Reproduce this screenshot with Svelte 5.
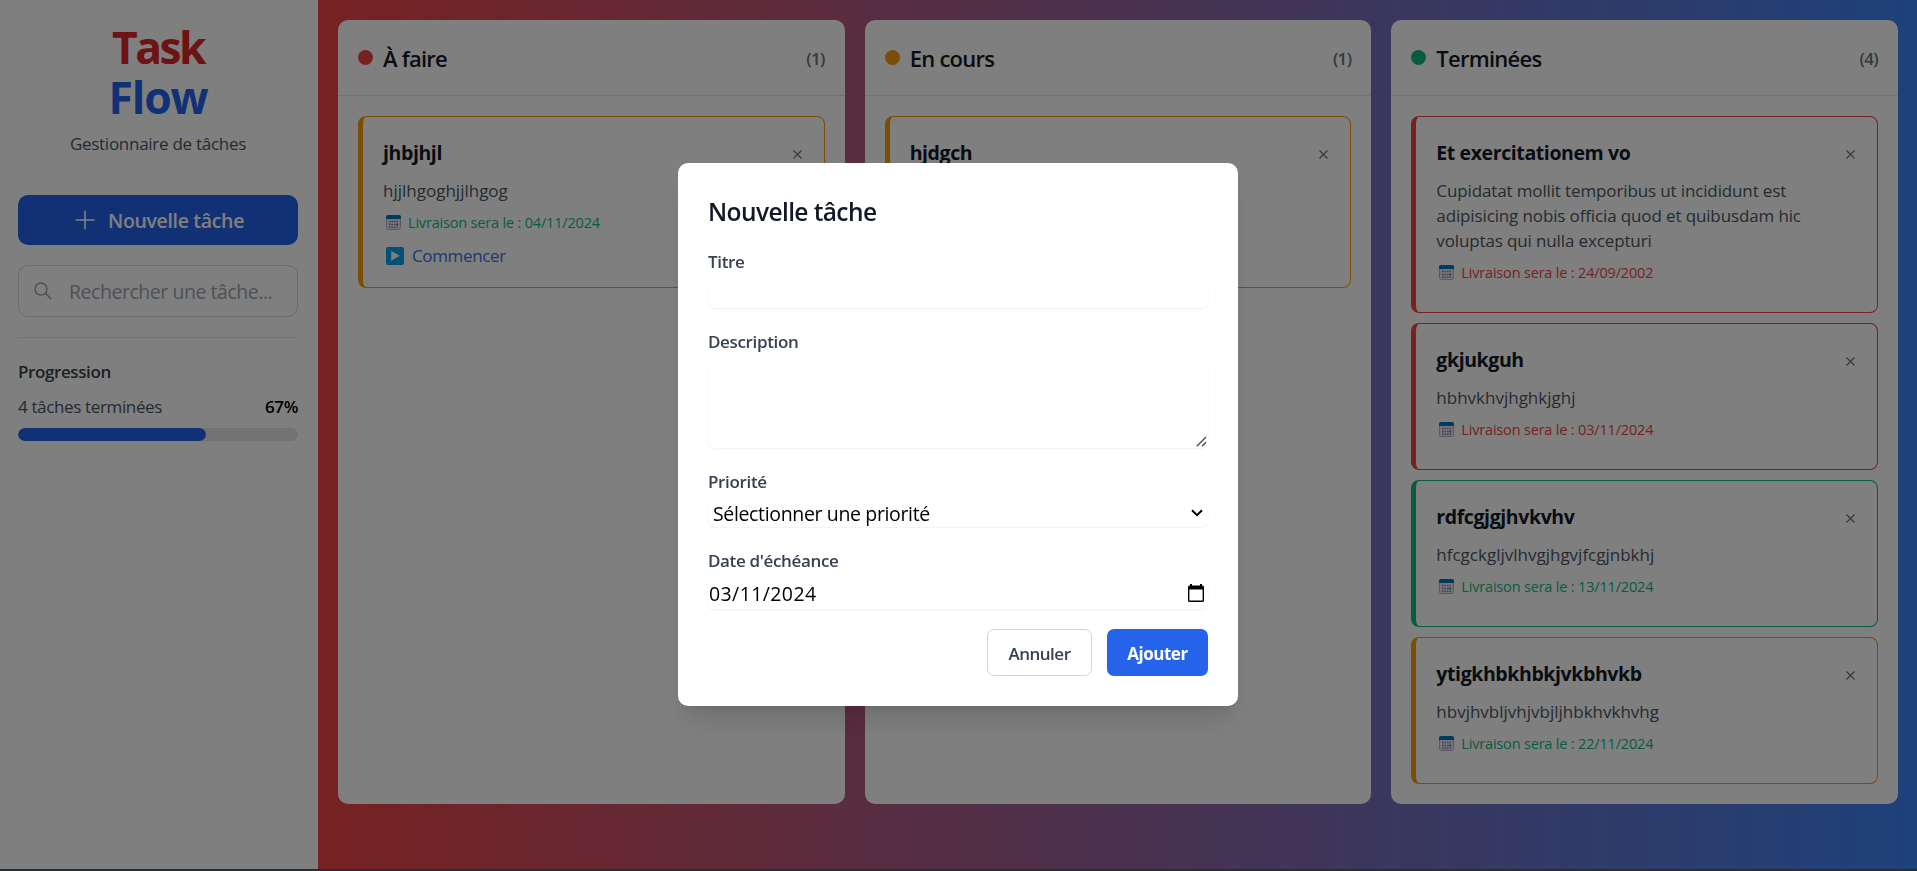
<script>
  const columns = [
    {
      name: 'À faire', color: '#ef4444',
      tasks: [
        { title: 'jhbjhjl', text: ['hjjlhgoghjjlhgog'], date: '04/11/2024', late: false, color: '#f59e0b', action: 'Commencer' }
      ]
    },
    {
      name: 'En cours', color: '#f59e0b',
      tasks: [
        { title: 'hjdgch', text: ['hjdgch'], date: '04/11/2024', late: false, color: '#f59e0b', action: 'Terminer' }
      ]
    },
    {
      name: 'Terminées', color: '#10b981',
      tasks: [
        { title: 'Et exercitationem vo', text: ['Cupidatat mollit temporibus ut incididunt est', 'adipisicing nobis officia quod et quibusdam hic', 'voluptas qui nulla excepturi'], date: '24/09/2002', late: true, color: '#ef4444' },
        { title: 'gkjukguh', text: ['hbhvkhvjhghkjghj'], date: '03/11/2024', late: true, color: '#ef4444' },
        { title: 'rdfcgjgjhvkvhv', text: ['hfcgckgljvlhvgjhgvjfcgjnbkhj'], date: '13/11/2024', late: false, color: '#10b981' },
        { title: 'ytigkhbkhbkjvkbhvkb', text: ['hbvjhvbljvhjvbjljhbkhvkhvhg'], date: '22/11/2024', late: false, color: '#f59e0b' }
      ]
    }
  ];
  const done = columns[2].tasks.length;
</script>

<div class="app">
  <aside>
    <h1><span class="red">Task</span><span class="blue">Flow</span></h1>
    <p class="sub">Gestionnaire de tâches</p>
    <button class="new">
      <svg width="20" height="20" viewBox="0 0 20 20"><path d="M10 .5v19M.5 10h19" stroke="#fff" stroke-width="1.6" fill="none" /></svg>
      <span>Nouvelle tâche</span>
    </button>
    <div class="search">
      <svg width="18" height="18" viewBox="0 0 18 18" fill="none" stroke="#9ca3af" stroke-width="1.5"><circle cx="7" cy="7" r="6" /><path d="M11.4 11.4l5.8 5.6" /></svg>
      <span>Rechercher une tâche...</span>
    </div>
    <hr />
    <h3>Progression</h3>
    <div class="stat"><span>{done} tâches terminées</span><b>67%</b></div>
    <div class="bar"><i style="width:67%"></i></div>
  </aside>

  <main>
    {#each columns as col}
      <section>
        <header>
          <i class="dot" style="background:{col.color}"></i>
          <h2>{col.name}</h2>
          <span class="count">({col.tasks.length})</span>
        </header>
        <div class="list">
          {#each col.tasks as t}
            <article style="border-color:{t.color}">
              <div class="head">
                <h4>{t.title}</h4>
                <svg class="x" width="9" height="9" viewBox="0 0 9 9"><path d="M.5 .5l8 8M8.5 .5l-8 8" stroke="#6b7280" stroke-width="1.2" /></svg>
              </div>
              <div class="desc" class:single={t.text.length === 1}>{#each t.text as line}<div>{line}</div>{/each}</div>
              <div class="date" class:late={t.late}>
                <svg width="15" height="15" viewBox="0 0 15 15">
                  <rect x=".5" y=".5" width="14" height="14" rx="1.8" fill="#ece6f2" stroke="#b9aec6" />
                  <path d="M0 4V2a2 2 0 0 1 2-2h11a2 2 0 0 1 2 2v2z" fill="#0074ba" />
                  <path d="M3 6.5h10M3 9.5h10M3 12.3h10" stroke="#8b7f99" stroke-width="1.4" stroke-dasharray="1.5 1" />
                  <rect x="10.4" y="8.7" width="1.8" height="1.6" fill="#0883d9" />
                </svg>
                <span>Livraison sera le : {t.date}</span>
              </div>
              <div class="foot">
                {#if t.action}
                  <div class="act">
                    <svg width="18" height="18" viewBox="0 0 18 18"><rect width="18" height="18" rx="2" fill="#00a6ed" /><path d="M5.2 4l8.6 4.8-8.6 4.9z" fill="#fff" /></svg>
                    <span>{t.action}</span>
                  </div>
                {/if}
              </div>
            </article>
          {/each}
        </div>
      </section>
    {/each}
  </main>
</div>

<div class="overlay">
  <form class="modal">
    <h2 class="mtitle">Nouvelle tâche</h2>
    <label for="t">Titre</label>
    <input id="t" class="field" />
    <label for="d">Description</label>
    <div class="area">
      <textarea id="d" class="field"></textarea>
      <svg class="grip" width="11" height="11" viewBox="0 0 11 11"><path d="M.8 10.3L10 1M6 10.3L10 6.2" stroke="#444" stroke-width="1.3" fill="none" /></svg>
    </div>
    <label for="p">Priorité</label>
    <div id="p" class="field select">
      <span>Sélectionner une priorité</span>
      <svg width="12" height="8" viewBox="0 0 12 8"><path d="M1 1.2l5 5 5-5" fill="none" stroke="#000" stroke-width="2" /></svg>
    </div>
    <label for="e">Date d'échéance</label>
    <div id="e" class="field day">
      <span>03/11/2024</span>
      <svg width="16" height="18" viewBox="0 0 16 18"><path d="M2 0h2v1.6h8V0h2v1.6h.4A1.6 1.6 0 0 1 16 3.200v13.200a1.600 1.600 0 0 1-1.600 1.600H1.600A1.600 1.600 0 0 1 0 16.400V3.200A1.600 1.600 0 0 1 1.600 1.600H2zM1.400 5.600v11h13.200v-11z" fill="#000" fill-rule="evenodd" /></svg>
    </div>
    <div class="buttons">
      <button type="button" class="cancel"><span>Annuler</span></button>
      <button type="button" class="add"><span>Ajouter</span></button>
    </div>
  </form>
</div>
<div class="edge"></div>

<style>
  :global(body) { margin: 0; overflow: hidden; }
  .app, .overlay { font-family: "Open Sans", "Noto Sans", sans-serif; }
  .app *, .overlay, .overlay * { box-sizing: border-box; }
  h1, h2, h3, h4, p { margin: 0; }
  span, h2, h3, h4, .desc div { white-space: nowrap; }
  button, input, textarea { font-family: inherit; }
  .app { display: flex; height: 871px; background: #fff; }
  aside { width: 318px; flex: none; padding: 20px 20px 0 18px; background: #fff; }
  h1 { display: flex; flex-direction: column; align-items: center; font-size: 44.5px; line-height: 50px; font-weight: 700; padding: 2px 0 3px; letter-spacing: -1.2px; }
  .red { color: #dc2626; letter-spacing: -2.6px; }
  .blue { color: #2563eb; }
  .sub { text-align: center; color: #4b5563; font-size: 17px; line-height: 25px; margin-top: 6px; letter-spacing: -.27px; }
  .new { width: 280px; height: 50px; margin-top: 39px; padding: 0 0 0 3px; border: 0; border-radius: 10px; background: #2563eb; color: #fff; display: flex; align-items: center; justify-content: center; gap: 13px; font-size: 19.5px; font-weight: 600; letter-spacing: -.33px; }
  .new span { padding-top: 1px; }
  .search { width: 280px; height: 52px; margin-top: 20px; border: 1px solid #d1d5db; border-radius: 10px; display: flex; align-items: center; padding-left: 15px; gap: 17px; color: #9ca3af; font-size: 19.5px; letter-spacing: -.46px; }
  .search svg { margin-bottom: 1px; }
  .search span { padding-top: 1px; }
  hr { width: 280px; height: 1px; margin: 20px 0 0; border: 0; background: #e5e7eb; }
  h3 { margin-top: 20px; color: #374151; font-size: 17px; line-height: 28px; font-weight: 600; letter-spacing: -.4px; }
  .stat { width: 280px; display: flex; justify-content: space-between; margin-top: 8px; font-size: 17px; line-height: 25px; color: #4b5563; letter-spacing: -.36px; }
  .stat b { color: #000; font-weight: 600; }
  .bar { width: 280px; height: 13px; margin-top: 9px; border-radius: 7px; background: #e5e7eb; overflow: hidden; }
  .bar i { display: block; height: 100%; border-radius: 7px; background: #2563eb; }

  main { flex: 1; display: grid; grid-template-columns: repeat(3, minmax(0, 1fr)); gap: 20px; padding: 20px 19px 20px 20px; align-items: start; background: linear-gradient(to right, #ef4444, #3b82f6); }
  section { height: 784px; border-radius: 10px; background: #fff; }
  header { height: 76px; padding: 0 20px; border-bottom: 1px solid #e5e7eb; display: flex; align-items: center; }
  .dot { width: 15px; height: 15px; border-radius: 50%; margin-right: 10px; }
  header h2 { flex: 1; color: #111827; font-size: 22px; font-weight: 600; line-height: 35px; letter-spacing: -.75px; }
  header h2 { padding-top: 1px; }
  .count { color: #6b7280; font-size: 17px; font-weight: 600; letter-spacing: -.7px; padding-top: 2px; }
  .list { display: flex; flex-direction: column; gap: 10px; padding: 20px; }
  article { border: 1px solid; border-left-width: 5px; border-radius: 8px; padding: 20px; }
  .head { display: flex; justify-content: space-between; align-items: center; height: 30px; padding-right: 2px; }
  h4 { color: #111827; font-size: 19.5px; line-height: 30px; font-weight: 700; letter-spacing: -.4px; padding-top: 2px; }
  .x { margin-top: 5px; }
  .desc { margin: 11px 0 9px; color: #4b5563; font-size: 17px; line-height: 25px; letter-spacing: -.13px; }
  .single { letter-spacing: 0; }
  .date { display: flex; align-items: center; gap: 7px; height: 20px; padding-left: 3px; color: #10b981; font-size: 14.5px; letter-spacing: -.18px; }
  .late { color: #ef4444; }
  .foot { margin-top: 10px; }
  .act { display: flex; align-items: center; gap: 8px; height: 25px; padding-left: 3px; color: #3b6fe0; font-size: 17px; letter-spacing: -.35px; }
  .act svg { margin-top: 2px; }
  .act span { padding-top: 1px; }

  .overlay { position: fixed; inset: 0; background: rgba(0, 0, 0, .5); display: flex; align-items: center; justify-content: center; padding: 0 1px 2px 0; }
  .modal { width: 560px; height: 543px; padding: 30px; border-radius: 10px; background: #fff; box-shadow: 0 20px 25px -5px rgba(0, 0, 0, .1), 0 8px 10px -6px rgba(0, 0, 0, .1); }
  .mtitle { color: #111827; font-size: 24.5px; line-height: 33px; font-weight: 600; letter-spacing: -.6px; padding-top: 2px; }
  label { display: block; margin-top: 22px; color: #374151; font-size: 17px; line-height: 23px; font-weight: 600; letter-spacing: -.35px; }
  .field { display: flex; width: 500px; height: 30px; margin: 5px 0 0; padding: 0; border: 0; border-radius: 7px; background: #fff; color: #000; font-size: 19.5px; letter-spacing: -.35px; box-shadow: 0 1px 2px rgba(0, 0, 0, .06); align-items: center; justify-content: space-between; }
  .area { position: relative; }
  textarea.field { display: block; height: 90px; resize: none; }
  .grip { position: absolute; right: 1px; bottom: 1px; }
  .select { height: 29px; padding: 0 5px; }
  .select span { padding-top: 2px; }
  .day { height: 32px; padding: 0 4px 0 1px; letter-spacing: .4px; }
  .buttons { display: flex; justify-content: flex-end; gap: 15px; margin-top: 20px; }
  .buttons button { height: 47px; padding: 2px 0 0; border-radius: 7px; font-size: 17px; letter-spacing: -.5px; }
  .cancel { width: 105px; border: 1px solid #d1d5db; background: #fff; color: #374151; font-weight: 600; }
  .add { width: 101px; border: 0; background: #2563eb; color: #fff; font-weight: 700; }
  .edge { position: fixed; left: 0; right: 0; bottom: 0; height: 2px; background: #2a2d30; }
</style>
